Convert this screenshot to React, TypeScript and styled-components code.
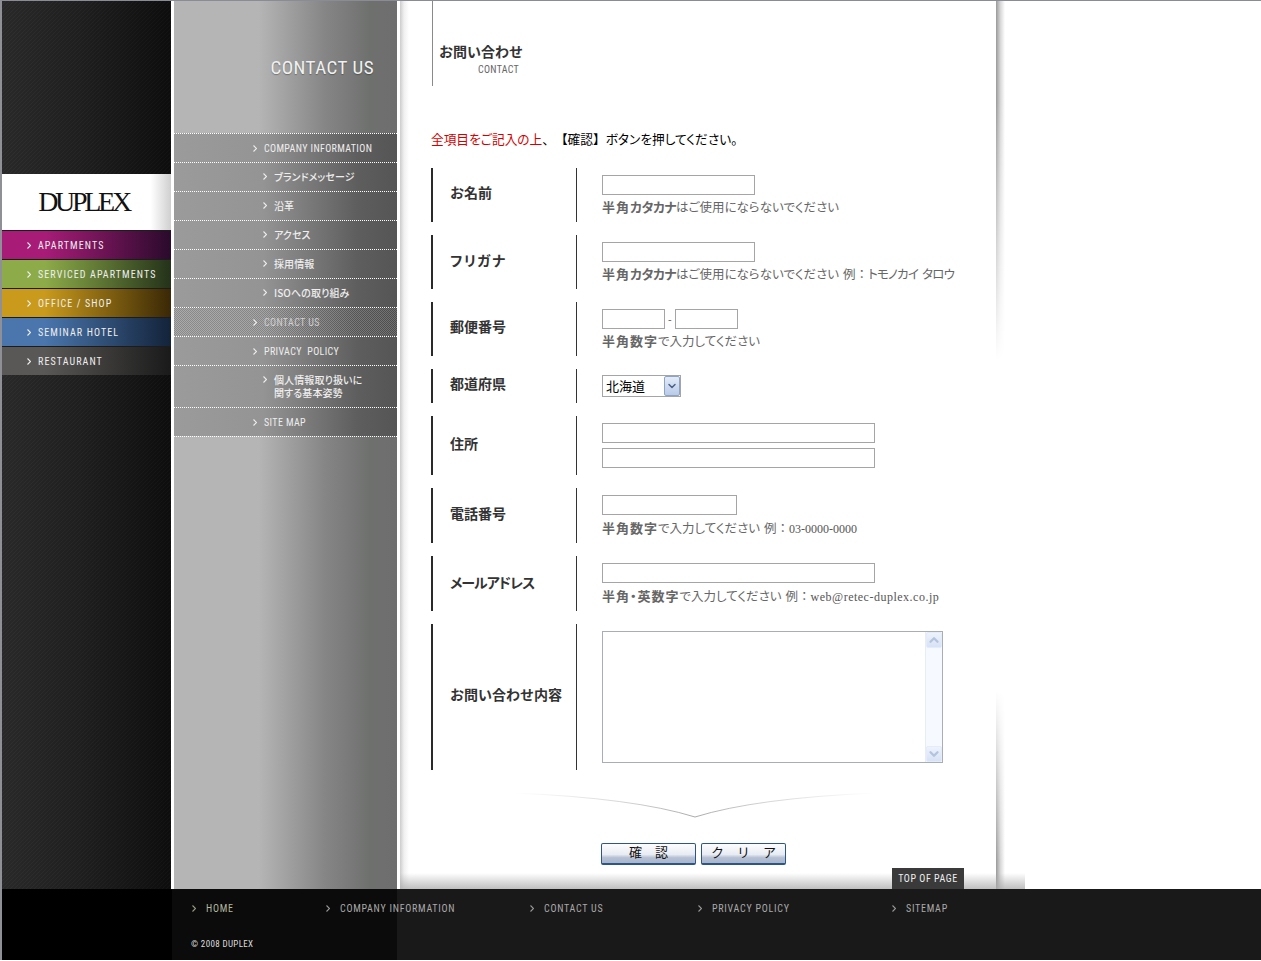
import React from 'react';
import styled, { createGlobalStyle } from 'styled-components';
import { ChevronUp, ChevronDown } from 'lucide-react';

const GlobalStyle = createGlobalStyle`
  html, body { margin: 0; padding: 0; background: #fff; }
  body { font-family: "Liberation Sans", "Noto Sans CJK JP", sans-serif; overflow: hidden; }
  * { box-sizing: border-box; }
`;

const din = `"Roboto", "Liberation Sans", "Noto Sans CJK JP", sans-serif`;
const jp = `"Noto Sans CJK JP", "Liberation Sans", sans-serif`;

const Main = styled.div`
  position: relative;
  display: flex;
  height: 889px;
  border-top: 1px solid #8b8b96;
  border-left: 2px solid #8f8f98;
`;

const SideCol = styled.div`
  width: 169px;
  display: flex;
  flex-direction: column;
  background:
    repeating-linear-gradient(135deg, rgba(255,255,255,.025) 0 .707px, rgba(0,0,0,.06) .707px 2.828px),
    linear-gradient(90deg, #2b2b2b, #212121 45%, #0e0e0e);
`;

const Logo = styled.div`
  margin-top: 173px;
  height: 56px;
  display: flex;
  align-items: center;
  justify-content: center;
  padding-right: 6px;
  background: linear-gradient(90deg, #fff 88%, #cfcfcf);
  font-family: "Liberation Serif", serif;
  font-size: 28px;
  letter-spacing: -3.3px;
  color: #111;
`;

const SideItem = styled.div<{ $from: string; $to: string }>`
  height: 29px;
  display: flex;
  align-items: center;
  padding-left: 25px;
  gap: 7px;
  border-top: 1px solid #1c1c1c;
  background: linear-gradient(90deg, ${p => p.$from}, ${p => p.$from} 25%, ${p => p.$to});
  font-family: ${din};
  font-stretch: condensed;
  font-size: 10px;
  letter-spacing: 1.1px;
  color: #eee;
`;

const MenuCol = styled.div`
  width: 223px;
  margin-left: 3px;
  background: linear-gradient(90deg, #b5b5b5, #b5b5b5 38%, #858585 68%, #6e706e 88%, #6e6e6e);
`;

const MenuHead = styled.div`
  height: 132px;
  display: flex;
  align-items: center;
  justify-content: flex-end;
  padding: 0 23px 0 0;
  font-family: ${din};
  font-stretch: condensed;
  font-size: 19px;
  letter-spacing: .5px;
  color: #f1f1f1;
  text-shadow: 0 1px 1px rgba(0,0,0,.3);
`;

const MenuList = styled.div`
  border-bottom: 1px dotted #fff;
`;

const MenuItem = styled.div<{ $sub?: boolean; $active?: boolean; $tall?: boolean }>`
  height: ${p => (p.$tall ? 42 : 29)}px;
  display: flex;
  align-items: ${p => (p.$tall ? 'flex-start' : 'center')};
  padding-top: ${p => (p.$tall ? '7px' : '0')};
  padding-bottom: ${p => (p.$sub && !p.$tall ? '2px' : '0')};
  padding-left: ${p => (p.$sub ? 89 : 79)}px;
  gap: 7px;
  border-top: 1px dotted #fff;
  background:
    ${p => (p.$active ? 'repeating-conic-gradient(rgba(255,255,255,.16) 0 25%, rgba(0,0,0,.1) 0 50%) 0 0/2px 2px,' : '')}
    linear-gradient(90deg, #9b9b9b, #949494 40%, #5e5e5e 82%, #555);
  font-family: ${p => (p.$sub ? jp : din)};
  font-feature-settings: "palt";
  font-stretch: condensed;
  font-weight: ${p => (p.$sub ? 500 : 400)};
  font-size: 10px;
  line-height: 13px;
  letter-spacing: ${p => (p.$sub ? '.1px' : '.38px')};
  color: ${p => (p.$active ? '#cfcfcf' : '#eee')};

  svg { flex: none; margin-top: ${p => (p.$tall ? '3px' : '0')}; }
`;

const MenuLabel = styled.span`
  white-space: pre;
`;

const Content = styled.div`
  position: relative;
  width: 596px;
  margin-left: 3px;
  padding-left: 31px;
  background: linear-gradient(90deg, #ccc, #f0f0f0 4px, #fff 9px);
`;

const EdgeShadow = styled.div`
  width: 9px;
  background: linear-gradient(90deg, #999, #d8d8d8 50%, #fff);
  -webkit-mask-image: linear-gradient(180deg, #000 0, #000 100px, transparent 360px, transparent 690px, #000 860px);
  mask-image: linear-gradient(180deg, #000 0, #000 100px, transparent 360px, transparent 690px, #000 860px);
`;

const PageHead = styled.div`
  margin-left: 1px;
  height: 85px;
  width: 200px;
  border-left: 1px solid #8a8a8a;
  padding: 41px 0 0 6px;
`;

const PageTitle = styled.div`
  font-family: ${jp};
  font-size: 14px;
  line-height: 18px;
  font-weight: 700;
  color: #333;
`;

const PageSub = styled.div`
  margin: 4px 0 0 39px;
  font-family: ${din};
  font-stretch: condensed;
  font-size: 10px;
  line-height: 12px;
  letter-spacing: .3px;
  color: #666;
`;

const Lead = styled.p`
  margin: 44px 0 0;
  height: 18px;
  font-family: ${jp};
  font-feature-settings: "palt";
  font-size: 12.7px;
  line-height: 18px;
  color: #000;
`;

const Red = styled.span`
  color: #d40000;
`;

const LeadMark = styled.span`
  font-feature-settings: normal;
  text-spacing-trim: space-all;
`;

const Form = styled.div`
  margin-top: 20px;
  display: flex;
  flex-direction: column;
  gap: 13px;
`;

const Row = styled.div<{ $h: number }>`
  height: ${p => p.$h}px;
  display: flex;
  border-left: 2px solid #2a2a2a;
`;

const Label = styled.div<{ $track?: number }>`
  width: 144px;
  display: flex;
  align-items: center;
  padding: 0 0 ${p => (p.$track ? 4 : 6)}px 17px;
  border-right: 1px solid #333;
  font-family: ${jp};
  font-feature-settings: ${p => (p.$track ? '"palt"' : 'normal')};
  font-size: 14px;
  font-weight: 700;
  letter-spacing: ${p => p.$track ?? 0}px;
  white-space: nowrap;
  color: #333;
`;

const Field = styled.div`
  padding: 7px 0 0 25px;
  display: flex;
  flex-direction: column;
  align-items: flex-start;
`;

const Input = styled.input<{ $w: number }>`
  width: ${p => p.$w}px;
  height: 20px;
  padding: 0;
  border: 1px solid #a5a5a5;
  background: #fff;
  display: block;
`;

const StackedInput = styled(Input)`
  & + & { margin-top: 5px; }
`;

const InputLine = styled.div`
  display: flex;
  align-items: center;
  gap: 3px;
  font-size: 11px;
  color: #666;
`;

const Hint = styled.div<{ $low?: boolean }>`
  margin-top: ${p => (p.$low ? 4 : 3)}px;
  font-family: ${jp};
  font-feature-settings: "palt";
  font-size: 12.5px;
  line-height: 18px;
  white-space: pre;
  color: #666;

  b { font-size: 13px; font-weight: 700; letter-spacing: 1px; }
`;

const BoldKana = styled.span`
  letter-spacing: -.5px;
`;

const ExampleKana = styled.span`
  letter-spacing: -.8px;
`;

const ExampleHead = styled.span`
  margin-left: 4px;
  font-feature-settings: normal;
`;

const Example = styled.span<{ $wide?: boolean }>`
  font-family: "Liberation Serif", serif;
  font-size: 12px;
  letter-spacing: ${p => (p.$wide ? '.5px' : '0')};
  color: #555;
`;

const SelectBox = styled.div`
  margin-top: -1px;
  position: relative;
  width: 79px;
  height: 22px;
  border: 1px solid #a5a5a5;
  display: flex;
  align-items: center;
  padding: 0 0 2px 3px;
  font-family: ${jp};
  font-size: 13px;
  color: #000;
`;

const SelectArrow = styled.span`
  position: absolute;
  right: 0;
  top: 0;
  width: 16px;
  height: 20px;
  display: flex;
  align-items: center;
  justify-content: center;
  border: 1px solid #8fa3c4;
  border-radius: 2px;
  background: linear-gradient(180deg, #e2ebf8, #b9cbe8);
  color: #4d6185;
`;

const TextAreaBox = styled.div`
  width: 341px;
  height: 132px;
  display: flex;
  border: 1px solid #a9adb5;
`;

const TextArea = styled.textarea`
  flex: 1;
  padding: 0;
  border: 0;
  resize: none;
  outline: none;
  background: #fff;
`;

const ScrollTrack = styled.div`
  width: 17px;
  display: flex;
  flex-direction: column;
  justify-content: space-between;
  background: #f6f9ff;
  border-left: 1px solid #e6edf9;
`;

const ScrollButton = styled.span`
  height: 16px;
  display: flex;
  align-items: center;
  justify-content: center;
  background: linear-gradient(180deg, #eef3fc, #d6e2f6);
  border: 1px solid #e4ecfa;
  border-radius: 2px;
  color: #b4c4dc;
`;

const Funnel = styled.svg`
  display: block;
  margin: 22px 0 0 83px;
`;

const Buttons = styled.div`
  margin: 25px 0 0 170px;
  display: flex;
  gap: 5px;
`;

const FormButton = styled.button<{ $w: number }>`
  width: ${p => p.$w}px;
  height: 22px;
  padding: 0 0 6px;
  border: 1px solid #2d5687;
  border-bottom-width: 2px;
  border-radius: 2px;
  background: linear-gradient(180deg, #fdfdfe, #e8ecf3 55%, #b5c0d3 72%, #a9b6cc);
  font-family: ${jp};
  font-size: 13px;
  line-height: 16px;
  color: #111;
  white-space: pre;
`;

const TopLink = styled.div`
  position: absolute;
  left: 890px;
  bottom: 0;
  width: 72px;
  height: 21px;
  display: flex;
  align-items: center;
  justify-content: center;
  background: #3a3a3a;
  font-family: ${din};
  font-stretch: condensed;
  font-size: 10px;
  letter-spacing: .55px;
  color: #eee;
`;

const BottomFade = styled.div`
  position: absolute;
  left: 398px;
  bottom: 0;
  width: 625px;
  height: 16px;
  background: linear-gradient(180deg, rgba(200,200,200,0), rgba(170,170,170,.75));
`;

const Footer = styled.div`
  position: relative;
  height: 71px;
  padding: 0 0 0 172px;
  border-left: 2px solid #8f8f98;
  background: linear-gradient(90deg, #000 170px, #0b0b0b 170px, #0b0b0b 395px, #191919 395px);
  font-family: ${din};
  font-stretch: condensed;
  font-size: 10px;
  color: #aaa;
`;

const FootLinks = styled.div`
  display: flex;
  padding: 12px 0 0 18px;
`;

const FootLink = styled.div<{ $w: number; $home?: boolean }>`
  width: ${p => p.$w}px;
  height: 14px;
  display: flex;
  align-items: center;
  gap: 10px;
  letter-spacing: .75px;
  color: ${p => (p.$home ? '#b4b89c' : '#aaa')};
`;

const Copy = styled.div`
  margin: 24px 0 0 17px;
  font-size: 9px;
  letter-spacing: .35px;
  color: #ddd;
`;

const Chevron = ({ color = '#eee' }: { color?: string }) => (
  <svg width="4" height="7" viewBox="0 0 4 7" fill="none">
    <path d="M.5.5 3.5 3.5.5 6.5" stroke={color} strokeWidth="1.1" />
  </svg>
);

const sideItems = [
  { label: 'APARTMENTS', from: '#a81c78', to: '#2a0a2c' },
  { label: 'SERVICED APARTMENTS', from: '#8dac49', to: '#24321a' },
  { label: 'OFFICE / SHOP', from: '#c99a1c', to: '#3a2806' },
  { label: 'SEMINAR HOTEL', from: '#4a76ad', to: '#13233a' },
  { label: 'RESTAURANT', from: '#5a5856', to: '#1a1a1a' },
];

const menuItems = [
  { label: 'COMPANY INFORMATION' },
  { label: 'ブランドメッセージ', sub: true },
  { label: '沿革', sub: true },
  { label: 'アクセス', sub: true },
  { label: '採用情報', sub: true },
  { label: 'ISOへの取り組み', sub: true },
  { label: 'CONTACT US', active: true },
  { label: 'PRIVACY  POLICY' },
  { label: '個人情報取り扱いに\n関する基本姿勢', sub: true, tall: true },
  { label: 'SITE MAP' },
];

const footLinks = [
  { label: 'HOME', w: 134, home: true },
  { label: 'COMPANY INFORMATION', w: 204 },
  { label: 'CONTACT US', w: 168 },
  { label: 'PRIVACY POLICY', w: 194 },
  { label: 'SITEMAP', w: 100 },
];

export default function App() {
  return (
    <>
      <GlobalStyle />
      <Main>
        <SideCol>
          <Logo>DUPLEX</Logo>
          {sideItems.map(item => (
            <SideItem key={item.label} $from={item.from} $to={item.to}>
              <Chevron />
              {item.label}
            </SideItem>
          ))}
        </SideCol>
        <MenuCol>
          <MenuHead>CONTACT US</MenuHead>
          <MenuList>
            {menuItems.map(item => (
              <MenuItem key={item.label} $sub={item.sub} $active={item.active} $tall={item.tall}>
                <Chevron />
                <MenuLabel>{item.label}</MenuLabel>
              </MenuItem>
            ))}
          </MenuList>
        </MenuCol>
        <Content>
          <PageHead>
            <PageTitle>お問い合わせ</PageTitle>
            <PageSub>CONTACT</PageSub>
          </PageHead>
          <Lead>
            <Red>全項目をご記入の上</Red><LeadMark>、【確認】</LeadMark>ボタンを押してください。
          </Lead>
          <Form>
            <Row $h={54}>
              <Label>お名前</Label>
              <Field>
                <Input $w={153} />
                <Hint><b>半角<BoldKana>カタカナ</BoldKana></b>はご使用にならないでください</Hint>
              </Field>
            </Row>
            <Row $h={54}>
              <Label $track={1.5}>フリガナ</Label>
              <Field>
                <Input $w={153} />
                <Hint><b>半角<BoldKana>カタカナ</BoldKana></b>はご使用にならないでください<ExampleHead>例：</ExampleHead><ExampleKana>トモノカイ  タロウ</ExampleKana></Hint>
              </Field>
            </Row>
            <Row $h={54}>
              <Label>郵便番号</Label>
              <Field>
                <InputLine>
                  <Input $w={63} />-<Input $w={63} />
                </InputLine>
                <Hint><b>半角数字</b>で入力してください</Hint>
              </Field>
            </Row>
            <Row $h={34}>
              <Label>都道府県</Label>
              <Field>
                <SelectBox>
                  北海道
                  <SelectArrow><ChevronDown size={12} strokeWidth={3} /></SelectArrow>
                </SelectBox>
              </Field>
            </Row>
            <Row $h={59}>
              <Label>住所</Label>
              <Field>
                <StackedInput $w={273} />
                <StackedInput $w={273} />
              </Field>
            </Row>
            <Row $h={55}>
              <Label>電話番号</Label>
              <Field>
                <Input $w={135} />
                <Hint $low><b>半角数字</b>で入力してください<ExampleHead>例：</ExampleHead><Example>03-0000-0000</Example></Hint>
              </Field>
            </Row>
            <Row $h={55}>
              <Label $track={-1}>メールアドレス</Label>
              <Field>
                <Input $w={273} />
                <Hint $low><b>半角・英数字</b>で入力してください<ExampleHead>例：</ExampleHead><Example $wide>web@retec-duplex.co.jp</Example></Hint>
              </Field>
            </Row>
            <Row $h={146}>
              <Label>お問い合わせ内容</Label>
              <Field>
                <TextAreaBox>
                  <TextArea />
                  <ScrollTrack>
                    <ScrollButton><ChevronUp size={14} strokeWidth={4} /></ScrollButton>
                    <ScrollButton><ChevronDown size={14} strokeWidth={4} /></ScrollButton>
                  </ScrollTrack>
                </TextAreaBox>
              </Field>
            </Row>
          </Form>
          <Funnel width="362" height="26" viewBox="0 0 362 26" fill="none">
            <defs>
              <linearGradient id="funnelLine" x1="0" x2="1" y1="0" y2="0">
                <stop offset="0" stopColor="#ccc" stopOpacity="0" />
                <stop offset=".5" stopColor="#aaa" />
                <stop offset="1" stopColor="#ccc" stopOpacity="0" />
              </linearGradient>
            </defs>
            <path d="M0 1Q120 6 181 25Q242 6 362 1" stroke="url(#funnelLine)" />
          </Funnel>
          <Buttons>
            <FormButton $w={95}>確　認</FormButton>
            <FormButton $w={85}>ク　リ　ア</FormButton>
          </Buttons>
        </Content>
        <EdgeShadow />
        <BottomFade />
        <TopLink>TOP OF PAGE</TopLink>
      </Main>
      <Footer>
        <FootLinks>
          {footLinks.map(link => (
            <FootLink key={link.label} $w={link.w} $home={link.home}>
              <Chevron color={link.home ? '#9a9e80' : '#999'} />
              {link.label}
            </FootLink>
          ))}
        </FootLinks>
        <Copy>© 2008 DUPLEX</Copy>
      </Footer>
    </>
  );
}
